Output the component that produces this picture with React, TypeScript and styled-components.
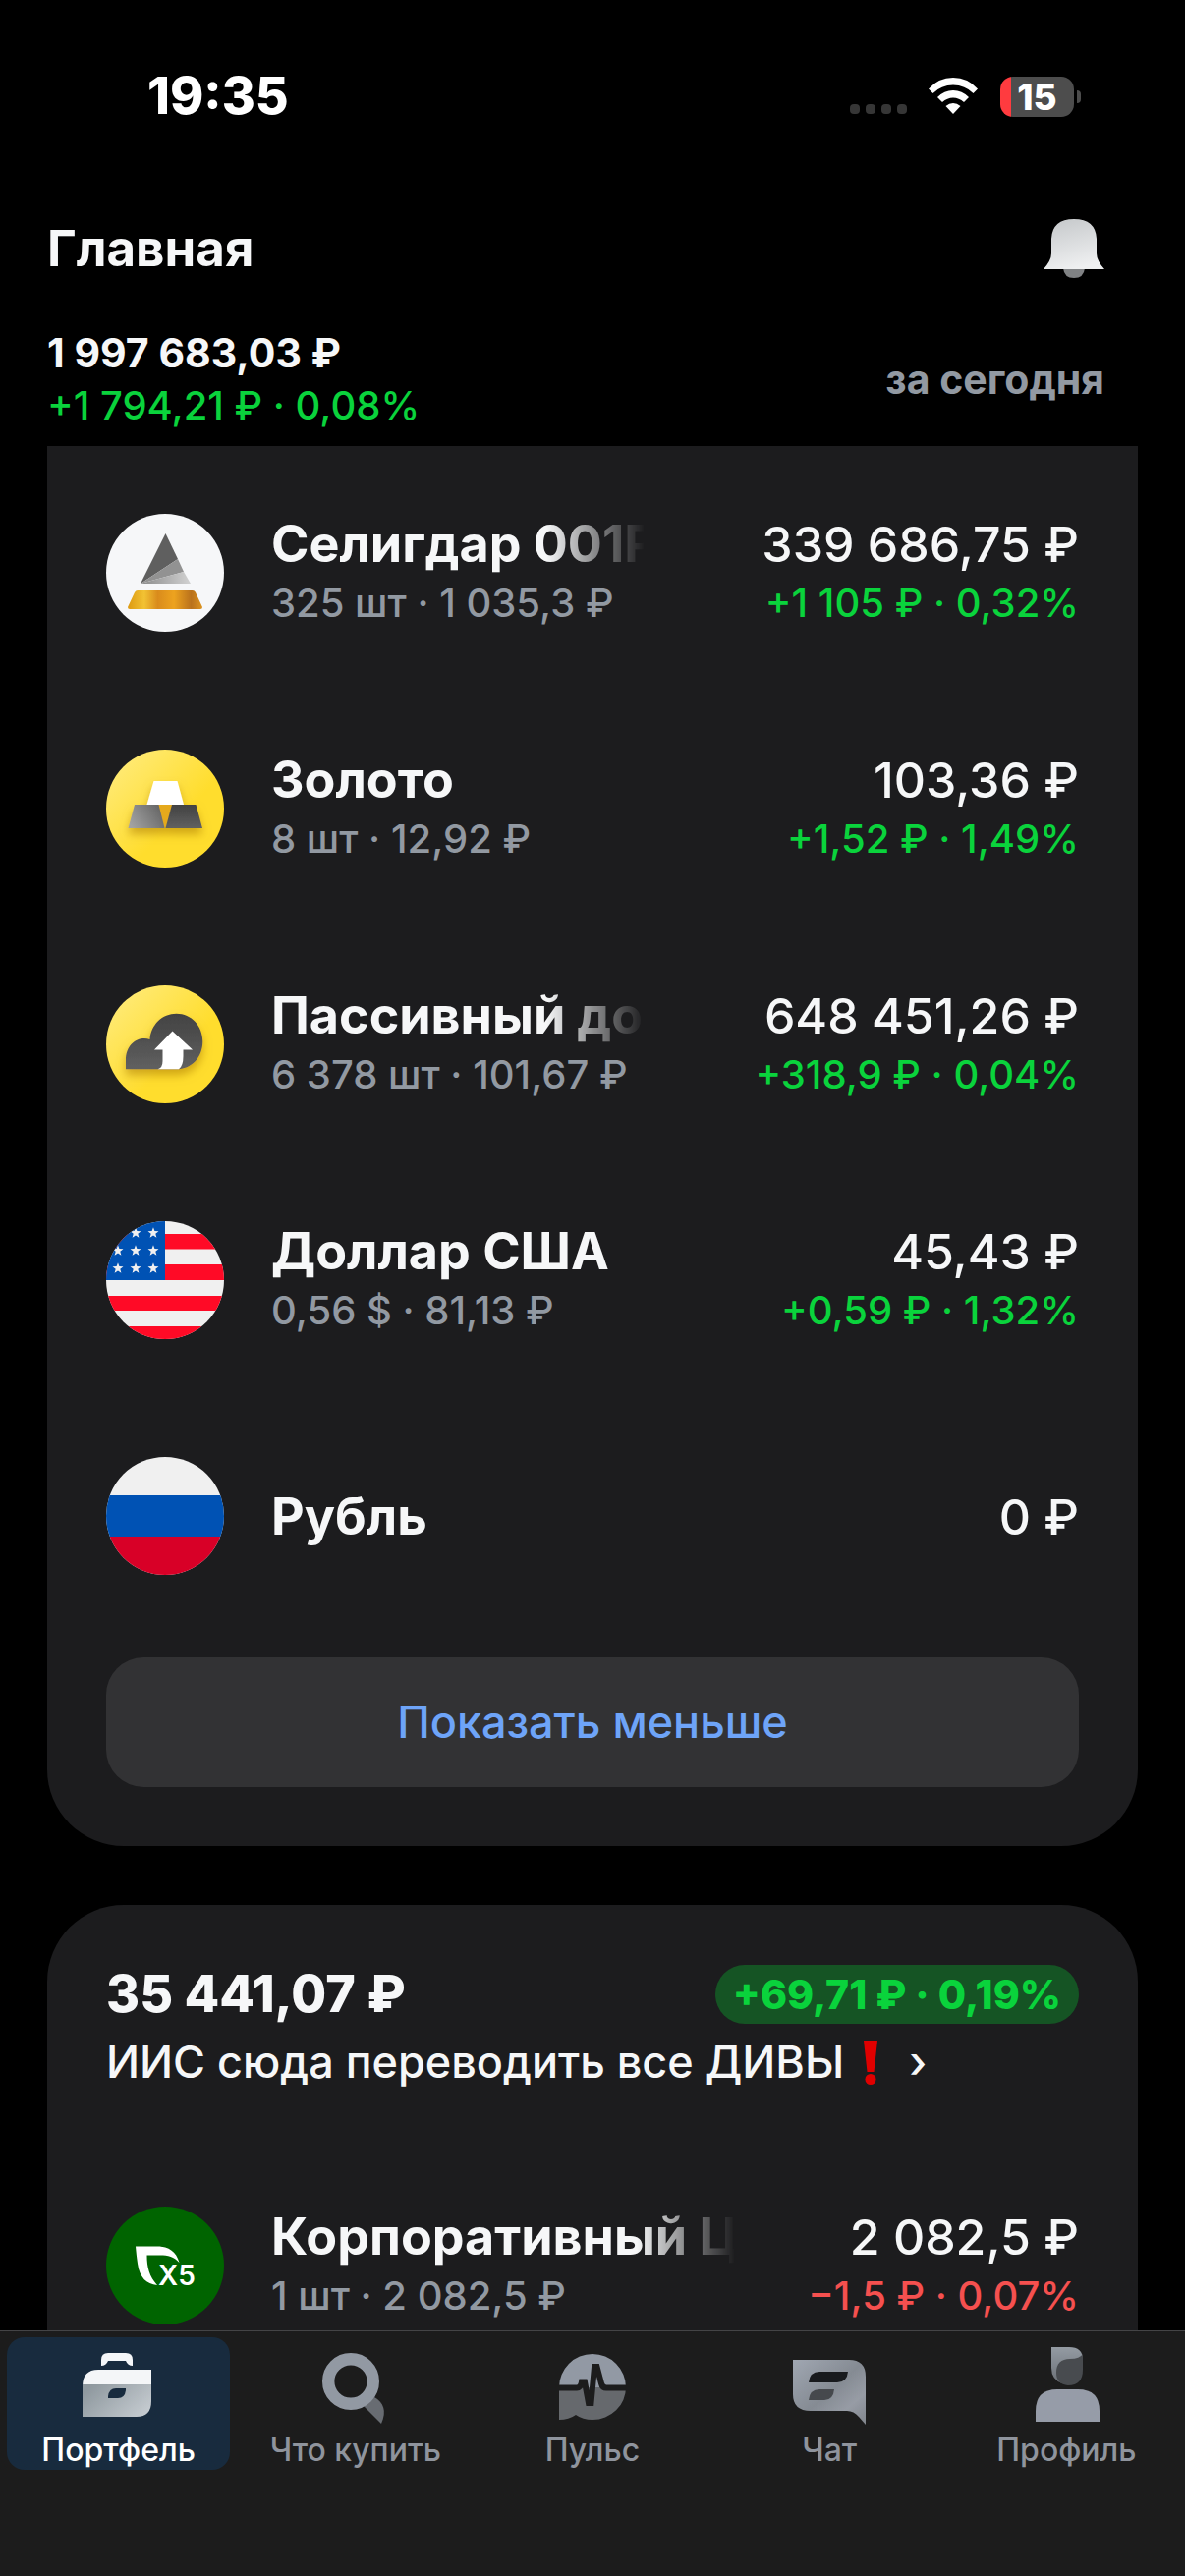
import React from 'react';
import styled, { createGlobalStyle } from 'styled-components';

const color = {
  page: '#000000',
  card: '#1c1c1e',
  bar: '#1c1c1c',
  text: '#f6f7f8',
  muted: '#9299a2',
  green: '#0ad33c',
  red: '#f5504f',
  link: '#6ea4f8',
};

const GlobalStyle = createGlobalStyle`
  * { box-sizing: border-box; }
  body {
    margin: 0;
    background: ${color.page};
    color: ${color.text};
    font-family: Inter, "Liberation Sans", sans-serif;
    -webkit-font-smoothing: antialiased;
  }
  h1, h2, p, ul { margin: 0; padding: 0; }
  ul { list-style: none; }
  button { font: inherit; color: inherit; border: 0; background: none; padding: 0; cursor: pointer; }
`;

const Screen = styled.div`
  display: flex;
  flex-direction: column;
  height: 100vh;
`;

/* ---------- status bar ---------- */

const StatusBar = styled.div`
  flex: none;
  display: flex;
  align-items: center;
  justify-content: space-between;
  height: 196px;
  padding: 0 106px 0 150px;
`;

const Clock = styled.time`
  font-size: 52px;
  line-height: 60px;
  font-weight: 800;
  color: #fff;
`;

const StatusIcons = styled.div`
  display: flex;
  align-items: center;
`;

const Dots = styled.div`
  display: flex;
  gap: 6px;
  align-self: flex-end;
  padding-bottom: 3px;
  margin-right: 22px;
`;

const Dot = styled.span`
  width: 10px;
  height: 10px;
  border-radius: 4px;
  background: #363636;
`;

const Wifi = styled.svg`
  width: 50px;
  height: 38px;
  margin-right: 23px;
`;

const Battery = styled.div`
  display: flex;
  align-items: center;
  justify-content: center;
  width: 75px;
  height: 41px;
  border-radius: 13px;
  font-size: 37px;
  line-height: 41px;
  font-weight: 800;
  color: #fff;
  background: linear-gradient(to right, #ff3b3f 11px, #4d4d4d 11px);
`;

const BatteryTip = styled.span`
  width: 4px;
  height: 13px;
  margin-left: 3px;
  border-radius: 0 4px 4px 0;
  background: #4d4d4d;
`;

/* ---------- header ---------- */

const TitleRow = styled.header`
  flex: none;
  display: flex;
  align-items: center;
  justify-content: space-between;
  height: 114px;
  padding: 0 82px 0 48px;
`;

const Title = styled.h1`
  font-size: 51px;
  line-height: 60px;
  font-weight: 700;
`;

const BellButton = styled.button`
  display: flex;
  svg { width: 62px; height: 61px; }
`;

const Summary = styled.section`
  flex: none;
  display: flex;
  align-items: center;
  justify-content: space-between;
  padding: 23px 82px 15px 48px;
  font-size: 40px;
  line-height: 53px;
`;

const Total = styled.p`
  font-size: 41px;
  font-weight: 700;
`;

const Change = styled.p`
  font-weight: 500;
  color: ${color.green};
`;

const Period = styled.button`
  font-size: 41px;
  font-weight: 700;
  color: ${color.muted};
`;

/* ---------- cards ---------- */

const Content = styled.main`
  flex: 1;
  min-height: 0;
  overflow: hidden;
  display: flex;
  flex-direction: column;
  gap: 60px;
  padding: 0 48px;
`;

const Card = styled.section<{ $continued?: boolean }>`
  flex: none;
  display: flex;
  flex-direction: column;
  background: ${color.card};
  border-radius: ${(p) => (p.$continued ? '0 0 78px 78px' : '78px')};
  padding: ${(p) => (p.$continued ? '9px 60px 60px' : '61px 60px')};
`;

const Row = styled.li`
  display: flex;
  align-items: center;
  height: 240px;
`;

const Avatar = styled.svg`
  flex: none;
  width: 120px;
  height: 120px;
  border-radius: 50%;
  margin-right: 48px;
`;

const Info = styled.div`
  flex: 1;
  min-width: 0;
  padding-top: 2px;
`;

const Name = styled.p<{ $fade?: number }>`
  font-size: 52px;
  line-height: 60px;
  font-weight: 700;
  white-space: nowrap;
  ${(p) =>
    p.$fade
      ? `mask-image: linear-gradient(to right, #000 ${p.$fade - 100}px, transparent ${p.$fade}px);`
      : ''}
`;

const Detail = styled.p`
  font-size: 40px;
  line-height: 60px;
  font-weight: 500;
  color: ${color.muted};
  white-space: nowrap;
`;

const Amounts = styled.div`
  flex: none;
  padding-top: 2px;
  text-align: right;
`;

const Value = styled.p`
  font-size: 50px;
  line-height: 60px;
  font-weight: 500;
`;

const Delta = styled.p<{ $down?: boolean }>`
  font-size: 40px;
  line-height: 60px;
  font-weight: 500;
  color: ${(p) => (p.$down ? color.red : color.green)};
`;

const ShowLess = styled.button`
  height: 132px;
  margin-top: 24px;
  border-radius: 38px;
  background: #323234;
  font-size: 45px;
  line-height: 60px;
  font-weight: 500;
  color: ${color.link};
`;

const CardHead = styled.div`
  display: flex;
  align-items: center;
  justify-content: space-between;
  height: 60px;
`;

const CardTotal = styled.h2`
  font-size: 52px;
  line-height: 60px;
  font-weight: 800;
`;

const Badge = styled.span`
  padding: 0 18px;
  border-radius: 30px;
  background: #155424;
  color: ${color.green};
  font-size: 41px;
  line-height: 60px;
  font-weight: 800;
`;

const AccountButton = styled.button`
  display: flex;
  align-items: center;
  gap: 15px;
  margin: 9px 0 57px;
  font-size: 45px;
  line-height: 60px;
  font-weight: 500;
  white-space: nowrap;
`;

const Exclamation = styled.svg`
  width: 36px;
  height: 48px;
`;

/* ---------- tab bar ---------- */

const TabBar = styled.nav`
  flex: none;
  display: grid;
  grid-template-columns: repeat(5, 1fr);
  border-top: 1px solid #444446;
  background: ${color.bar};
  padding: 6px 0 108px;
`;

const Tab = styled.button<{ $active?: boolean }>`
  display: flex;
  flex-direction: column;
  align-items: center;
  height: 135px;
  margin: 0 7px;
  padding-top: 7px;
  border-radius: 18px;
  background: ${(p) => (p.$active ? '#182b3e' : 'transparent')};
  color: ${(p) => (p.$active ? '#ffffff' : '#8f949d')};
  font-size: 32px;
  line-height: 38px;
  font-weight: 500;
  white-space: nowrap;
  svg { flex: none; width: 80px; height: 84px; margin-bottom: 5px; }
`;

/* ---------- drawings ---------- */

const SeligdarLogo = () => (
  <Avatar viewBox="0 0 120 120" aria-hidden>
    <defs>
      <linearGradient id="sg" x1="0" x2="1">
        <stop offset="0" stopColor="#dd9a12" />
        <stop offset="0.22" stopColor="#f2c233" />
        <stop offset="0.4" stopColor="#d98b1c" />
        <stop offset="0.62" stopColor="#eda31f" />
        <stop offset="0.85" stopColor="#b9711c" />
        <stop offset="1" stopColor="#dc9320" />
      </linearGradient>
      <linearGradient id="sl" x1="0" x2="1">
        <stop offset="0" stopColor="#8a8a8a" />
        <stop offset="1" stopColor="#d2d2d2" />
      </linearGradient>
    </defs>
    <rect width="120" height="120" fill="#f6f7f9" />
    <path d="M60.5 20 73 46 35 71Z" fill="#5f5f5f" />
    <path d="M73 46 79 59 35 71Z" fill="#929292" />
    <path d="M79 59 86 71H35Z" fill="url(#sl)" />
    <path d="M32 78H88Q90 78 91 80L98 95Q98 97 96 97H24Q22 97 22 95L29 80Q30 78 32 78Z" fill="url(#sg)" />
  </Avatar>
);

const YellowDefs = ({ id }: { id: string }) => (
  <defs>
    <linearGradient id={id} x1="0.1" y1="0.1" x2="0.6" y2="0.6">
      <stop offset="0" stopColor="#ffea76" />
      <stop offset="1" stopColor="#ffdd2d" />
    </linearGradient>
    <linearGradient id={`${id}-l`} x1="0" y1="0.7" x2="1" y2="0.3">
      <stop offset="0" stopColor="#a2a2a2" />
      <stop offset="1" stopColor="#646464" />
    </linearGradient>
    <linearGradient id={`${id}-d`} x1="0" y1="0" x2="0" y2="1">
      <stop offset="0" stopColor="#424242" />
      <stop offset="1" stopColor="#606060" />
    </linearGradient>
    <filter id={`${id}-s`} x="-30%" y="-30%" width="160%" height="170%">
      <feDropShadow dx="0" dy="6" stdDeviation="5" floodColor="#a87800" floodOpacity="0.55" />
    </filter>
  </defs>
);

const GoldLogo = () => (
  <Avatar viewBox="0 0 120 120" aria-hidden>
    <YellowDefs id="gold" />
    <rect width="120" height="120" fill="url(#gold)" />
    <g filter="url(#gold-s)">
      <path d="M53 56H67L60 80Z" fill="#e5a91f" />
      <path d="M29 56H53.500L59.500 80H22.500Z" fill="url(#gold-l)" />
      <path d="M67 56H91.500L98 80H60.500Z" fill="url(#gold-d)" />
      <path d="M48.500 32H72.500L79 56H41.500Z" fill="#fff" />
    </g>
  </Avatar>
);

const PassiveLogo = () => (
  <Avatar viewBox="0 0 120 120" aria-hidden>
    <YellowDefs id="cloud" />
    <rect width="120" height="120" fill="url(#cloud)" />
    <path
      d="M20 85.300V76C20 62 29 54 39 54Q42 54 44.500 55C45.500 40 57 28.700 71.500 28.700C87 28.700 98.300 41.500 98.300 57C98.300 73 87 85.300 71.500 85.300Z"
      fill="url(#cloud-d)"
      filter="url(#cloud-s)"
    />
    <path d="M67.500 46.500 88 65.500H78.500V72Q78.500 82 74 85.300H52.500Q57.500 84 57.500 77V65.500H49Z" fill="#fff" />
  </Avatar>
);

const starPoints = (cx: number, cy: number) =>
  Array.from({ length: 10 }, (_, i) => {
    const r = i % 2 ? 2.4 : 5.8;
    const a = (Math.PI / 5) * i - Math.PI / 2;
    return `${(cx + r * Math.cos(a)).toFixed(1)},${(cy + r * Math.sin(a)).toFixed(1)}`;
  }).join(' ');

const UsaFlag = () => (
  <Avatar viewBox="0 0 120 120" aria-hidden>
    <rect width="120" height="120" fill="#f0f0f0" />
    <path d="M0 13H120V28.500H0ZM0 44H120V60H0ZM0 76H120V91H0ZM0 107H120V120H0Z" fill="#ff0a26" />
    <rect width="60" height="60" fill="#0052b4" />
    {[12, 30, 48].map((y) =>
      [12, 30, 48].map((x) => <polygon key={`${x}-${y}`} points={starPoints(x, y)} fill="#f0f0f0" />),
    )}
  </Avatar>
);

const RussiaFlag = () => (
  <Avatar viewBox="0 0 120 120" aria-hidden>
    <rect width="120" height="120" fill="#f0f0f0" />
    <rect y="39" width="120" height="42" fill="#0052b4" />
    <rect y="81" width="120" height="39" fill="#d80027" />
  </Avatar>
);

const X5Logo = () => (
  <Avatar viewBox="0 0 120 120" aria-hidden>
    <rect width="120" height="120" fill="#006400" />
    <path
      d="M30 40.500H52C64 40.500 71.500 46 74.500 57C69 51 63 49.500 55 49.500H41.500C41.500 62 44 71 52 80C41 79 34 72 32 58C31 51 30.500 46 30 40.500Z"
      fill="#fff"
    />
    <text x="53" y="80" fill="#fff" fontFamily="Inter, sans-serif" fontWeight="600" fontSize="28">
      X5
    </text>
  </Avatar>
);

const BriefcaseIcon = () => (
  <svg viewBox="0 0 80 84" aria-hidden>
    <defs>
      <linearGradient id="case" x1="0" x2="1" y1="0.3" y2="0.8">
        <stop offset="0" stopColor="#8f999f" />
        <stop offset="1" stopColor="#c6ccd1" />
      </linearGradient>
    </defs>
    <path d="M22 22V16Q22 9 29 9H47Q54 9 54 16V22Q49 22 47 17H29Q27 22 22 22Z" fill="#f4f6f8" />
    <path d="M3 43Q3 26 19 26H73V43Z" fill="#f4f6f8" />
    <path d="M3 41H73V58Q73 74 58 74H3Z" fill="url(#case)" />
    <path d="M29 55V53Q30 45 37 45H47V47Q46 55 39 55Z" fill="#182b3e" />
  </svg>
);

const SearchIcon = () => (
  <svg viewBox="0 0 80 84" aria-hidden>
    <path d="M59 54C68 59 72 68 66 81L48 63Z" fill="#686c72" />
    <circle cx="35" cy="38" r="22.800" fill="none" stroke="#9299a3" strokeWidth="12.400" />
  </svg>
);

const PulseIcon = () => (
  <svg viewBox="0 0 80 84" aria-hidden>
    <path d="M6 44A34 34 0 0 1 74 44Z" fill="#9299a4" />
    <path d="M6 44H74A34 33 0 0 1 40 77Q30 77 23 72Q16 77 6 77Z" fill="#66696d" />
    <path
      d="M4 44.500H24Q28 44.500 29 38.500H32L36 60H38.500L42 23H44.500L49 40Q50 44.500 54 44.500H76"
      fill="none"
      stroke="#1c1c1c"
      strokeWidth="6"
    />
  </svg>
);

const ChatIcon = () => (
  <svg viewBox="0 0 80 84" aria-hidden>
    <defs>
      <linearGradient id="chat" x1="0" y1="0" x2="1" y2="1">
        <stop offset="0" stopColor="#a0a7b2" />
        <stop offset="0.5" stopColor="#858b93" />
        <stop offset="0.75" stopColor="#979ca5" />
        <stop offset="1" stopColor="#80858c" />
      </linearGradient>
    </defs>
    <path d="M3 16H60Q77 16 77 33V82L70 74Q65 68 58 68H21Q3 68 3 51Z" fill="url(#chat)" />
    <path d="M19 39Q20 28 30 28H59Q58 39 48 39Z" fill="#181a1d" />
    <path d="M19 57Q20 46 30 46H45Q44 57 35 57Z" fill="#46494d" />
  </svg>
);

const ProfileIcon = () => (
  <svg viewBox="0 0 80 84" aria-hidden>
    <defs>
      <linearGradient id="hair" x1="0" y1="0" x2="0" y2="1">
        <stop offset="0" stopColor="#949ba3" />
        <stop offset="1" stopColor="#6b7076" />
      </linearGradient>
    </defs>
    <path d="M25 3H43Q57 3 57 16Q50 15 43 16L36 40Q25 36 25 24Z" fill="url(#hair)" />
    <path d="M30 29Q30 15 44 15Q54 15 57 10V26Q57 42 42 42Q30 41 30 29Z" fill="#484b4f" />
    <path d="M9 79V68Q9 46 31 46H52Q74 46 74 68V79Z" fill="#969ca8" />
  </svg>
);

const BellIcon = () => (
  <svg viewBox="0 0 62 61" aria-hidden>
    <defs>
      <linearGradient id="bell" x1="0.2" y1="0" x2="0.5" y2="1">
        <stop offset="0" stopColor="#c6c9cb" />
        <stop offset="1" stopColor="#eff0f1" />
      </linearGradient>
    </defs>
    <path d="M20 50H42Q41 60 31 60Q21 60 20 50Z" fill="#808284" />
    <path d="M0 51Q8 42 8 35V20Q9 0 31 0Q53 0 54 20V35Q54 42 62 51Z" fill="url(#bell)" />
  </svg>
);

const WifiIcon = () => (
  <Wifi viewBox="0 0 50 38" aria-hidden>
    <path d="M0 11.500Q10 0 25 0Q40 0 50 11.500L45.500 16Q37 7.500 25 7.500Q13 7.500 4.500 16Z" fill="#fff" />
    <path d="M9 20Q16 13 25 13Q34 13 41 20L36 25Q31 20.500 25 20.500Q19 20.500 14 25Z" fill="#fff" />
    <path d="M17.500 29Q21 26 25 26Q29 26 32.500 29L25 37Z" fill="#fff" />
  </Wifi>
);

/* ---------- data ---------- */

interface Holding {
  logo: React.ReactNode;
  name: string;
  fade?: number;
  detail?: string;
  value: string;
  delta?: string;
  down?: boolean;
}

const holdings: Holding[] = [
  { logo: <SeligdarLogo />, name: 'Селигдар 001Р', fade: 380, detail: '325 шт · 1 035,3 ₽', value: '339 686,75 ₽', delta: '+1 105 ₽ · 0,32%' },
  { logo: <GoldLogo />, name: 'Золото', detail: '8 шт · 12,92 ₽', value: '103,36 ₽', delta: '+1,52 ₽ · 1,49%' },
  { logo: <PassiveLogo />, name: 'Пассивный до', fade: 380, detail: '6 378 шт · 101,67 ₽', value: '648 451,26 ₽', delta: '+318,9 ₽ · 0,04%' },
  { logo: <UsaFlag />, name: 'Доллар США', detail: '0,56 $ · 81,13 ₽', value: '45,43 ₽', delta: '+0,59 ₽ · 1,32%' },
  { logo: <RussiaFlag />, name: 'Рубль', value: '0 ₽' },
];

const iisHoldings: Holding[] = [
  { logo: <X5Logo />, name: 'Корпоративный Ц', fade: 472, detail: '1 шт · 2 082,5 ₽', value: '2 082,5 ₽', delta: '−1,5 ₽ · 0,07%', down: true },
];

const tabs = [
  { label: 'Портфель', icon: <BriefcaseIcon /> },
  { label: 'Что купить', icon: <SearchIcon /> },
  { label: 'Пульс', icon: <PulseIcon /> },
  { label: 'Чат', icon: <ChatIcon /> },
  { label: 'Профиль', icon: <ProfileIcon /> },
];

const HoldingList = ({ items }: { items: Holding[] }) => (
  <ul>
    {items.map((h) => (
      <Row key={h.name}>
        {h.logo}
        <Info>
          <Name $fade={h.fade}>{h.name}</Name>
          {h.detail && <Detail>{h.detail}</Detail>}
        </Info>
        <Amounts>
          <Value>{h.value}</Value>
          {h.delta && <Delta $down={h.down}>{h.delta}</Delta>}
        </Amounts>
      </Row>
    ))}
  </ul>
);

export default function App() {
  return (
    <Screen>
      <GlobalStyle />
      <StatusBar>
        <Clock>19:35</Clock>
        <StatusIcons>
          <Dots>
            <Dot />
            <Dot />
            <Dot />
            <Dot />
          </Dots>
          <WifiIcon />
          <Battery>15</Battery>
          <BatteryTip />
        </StatusIcons>
      </StatusBar>
      <TitleRow>
        <Title>Главная</Title>
        <BellButton aria-label="Уведомления">
          <BellIcon />
        </BellButton>
      </TitleRow>
      <Summary>
        <div>
          <Total>1 997 683,03 ₽</Total>
          <Change>+1 794,21 ₽ · 0,08%</Change>
        </div>
        <Period>за сегодня</Period>
      </Summary>
      <Content>
        <Card $continued>
          <HoldingList items={holdings} />
          <ShowLess>Показать меньше</ShowLess>
        </Card>
        <Card>
          <CardHead>
            <CardTotal>35 441,07 ₽</CardTotal>
            <Badge>+69,71 ₽ · 0,19%</Badge>
          </CardHead>
          <AccountButton>
            ИИС сюда переводить все ДИВЫ
            <Exclamation viewBox="0 0 36 48" aria-hidden>
              <path d="M5 2H19L15.500 34H8.500Z" fill="#e00000" />
              <circle cx="12" cy="41.500" r="5.500" fill="#e00000" />
            </Exclamation>
            <span>›</span>
          </AccountButton>
          <HoldingList items={iisHoldings} />
        </Card>
      </Content>
      <TabBar>
        {tabs.map((t, i) => (
          <Tab key={t.label} $active={i === 0} aria-current={i === 0 ? 'page' : undefined}>
            {t.icon}
            {t.label}
          </Tab>
        ))}
      </TabBar>
    </Screen>
  );
}
